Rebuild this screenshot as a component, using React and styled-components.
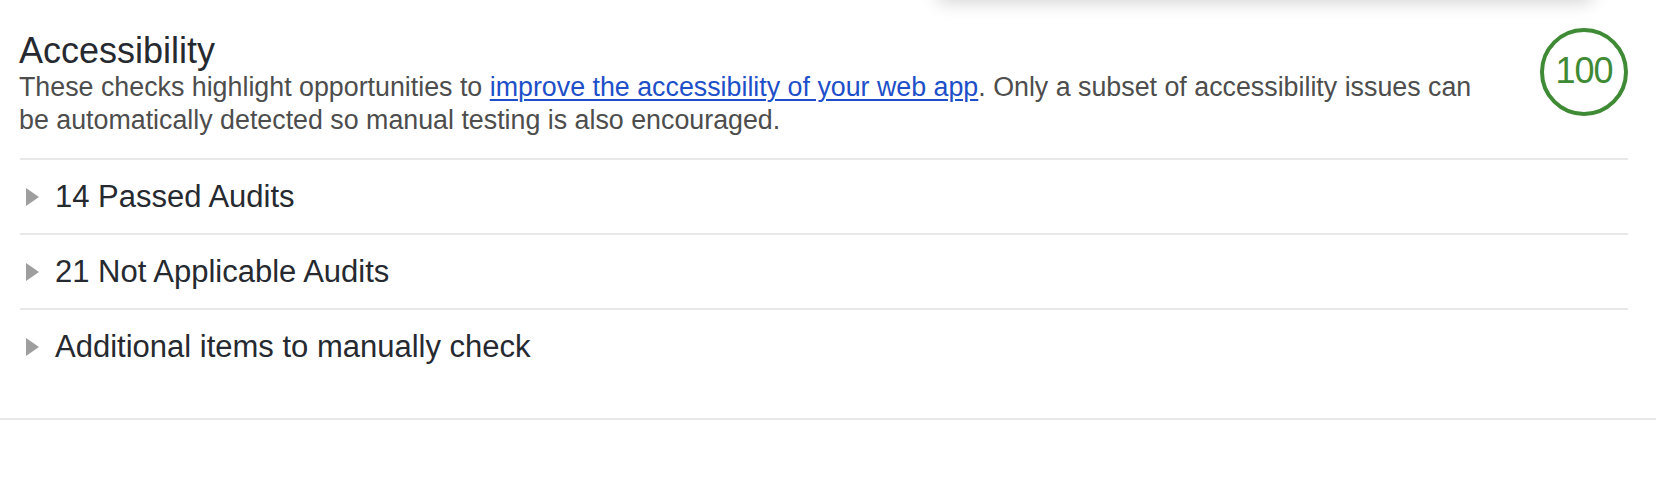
import React from 'react';
import styled, { createGlobalStyle } from 'styled-components';

const GlobalStyle = createGlobalStyle`
  html, body {
    margin: 0;
    padding: 0;
    background: #fff;
  }
  body {
    font-family: "Liberation Sans", Arial, Helvetica, sans-serif;
    overflow: hidden;
  }
`;

const Page = styled.div`
  position: relative;
  width: 1656px;
  height: 488px;
  overflow: hidden;
`;

// floating panel sitting just above the viewport, only its shadow shows
const TopPanel = styled.div`
  position: absolute;
  top: -100px;
  left: 938px;
  width: 654px;
  height: 99px;
  background: #fff;
  border-radius: 4px;
  box-shadow: 0 3px 18px rgba(0, 0, 0, 0.18);
`;

const Section = styled.section`
  padding: 0 28px 35px 20px;
  border-bottom: 2px solid #e8e8e8;
`;

const Header = styled.div`
  display: flex;
  justify-content: space-between;
  align-items: flex-start;
  padding-top: 28px;
  margin-bottom: 21px;
`;

const HeaderText = styled.div`
  margin-top: 3px;
  margin-left: -1px;
`;

const Title = styled.h2`
  margin: 0;
  font-size: 36px;
  line-height: 40px;
  font-weight: 400;
  color: #262a30;
`;

const Description = styled.p`
  margin: 0;
  width: 1468px;
  font-size: 26.8px;
  line-height: 33px;
  color: #4d4d4d;
`;

const DocLink = styled.a`
  color: #1d4fc9;
  text-decoration: underline;
  text-decoration-thickness: 2px;
  text-underline-offset: 3px;
`;

const Gauge = styled.div`
  box-sizing: border-box;
  width: 88px;
  height: 88px;
  border-radius: 50%;
  border: 4px solid #3f8a34;
  display: flex;
  align-items: center;
  justify-content: center;
  color: #3f8a34;
  font-size: 36px;
  letter-spacing: -1px;
  padding-bottom: 3px;
`;

const Group = styled.div`
  display: flex;
  align-items: center;
  height: 73px;
  border-top: 2px solid #e8e8e8;
  cursor: pointer;
`;

const Arrow = styled.span`
  width: 0;
  height: 0;
  margin-left: 6px;
  margin-right: 16px;
  border-left: 13px solid #9e9e9e;
  border-top: 9px solid transparent;
  border-bottom: 9px solid transparent;
`;

const GroupTitle = styled.span`
  font-size: 31px;
  line-height: 73px;
  color: #262a30;
`;

const groups = [
  '14 Passed Audits',
  '21 Not Applicable Audits',
  'Additional items to manually check',
];

const App = () => (
  <Page>
    <GlobalStyle />
    <TopPanel />
    <Section>
      <Header>
        <HeaderText>
          <Title>Accessibility</Title>
          <Description>
            These checks highlight opportunities to{' '}
            <DocLink href="#">improve the accessibility of your web app</DocLink>. Only a
            subset of accessibility issues can be automatically detected so manual testing
            is also encouraged.
          </Description>
        </HeaderText>
        <Gauge>100</Gauge>
      </Header>
      {groups.map(title => (
        <Group key={title}>
          <Arrow />
          <GroupTitle>{title}</GroupTitle>
        </Group>
      ))}
    </Section>
  </Page>
);

export default App;
